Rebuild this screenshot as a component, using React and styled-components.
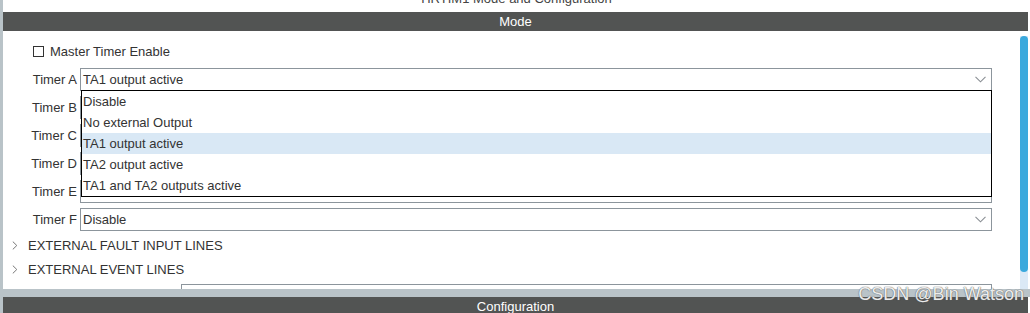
import React from 'react'
import styled, { createGlobalStyle } from 'styled-components'

const GlobalStyle = createGlobalStyle`
  html, body {
    margin: 0;
    padding: 0;
    background: #fff;
  }
  body {
    font-family: "Liberation Sans", Arial, sans-serif;
    color: #333;
  }
`

const timers = [
    { name: 'Timer A', value: 'TA1 output active', open: true },
    { name: 'Timer B', value: 'Disable' },
    { name: 'Timer C', value: 'Disable' },
    { name: 'Timer D', value: 'Disable' },
    { name: 'Timer E', value: 'Disable' },
    { name: 'Timer F', value: 'Disable' },
]

const options = [
    'Disable',
    'No external Output',
    'TA1 output active',
    'TA2 output active',
    'TA1 and TA2 outputs active',
]

function Chevron() {
    return (
        <svg width="11" height="7" viewBox="0 0 11 7">
            <polyline points="0.5,0.8 5.5,5.8 10.5,0.8" fill="none" stroke="#8a8f94" strokeWidth="1.1" />
        </svg>
    )
}

function Arrow() {
    return (
        <svg width="6" height="9" viewBox="0 0 6 9">
            <polyline points="0.8,0.6 4.8,4.5 0.8,8.4" fill="none" stroke="#777" strokeWidth="1" />
        </svg>
    )
}

function App() {
    return (
        <Root>
            <GlobalStyle />
            <TitleArea>
                <TitleText>HRTIM1 Mode and Configuration</TitleText>
            </TitleArea>
            <SectionBar>Mode</SectionBar>
            <Panel>
                <Form>
                    <CheckRow>
                        <CheckBox />
                        <span>Master Timer Enable</span>
                    </CheckRow>
                    <TimerList>
                        {timers.map(t => (
                            <TimerRow key={t.name}>
                                <TimerLabel>{t.name}</TimerLabel>
                                <Select>
                                    <SelectValue>{t.value}</SelectValue>
                                    <Chevron />
                                    {t.open && (
                                        <DropList>
                                            {options.map(o => (
                                                <DropItem key={o} selected={o === t.value}>{o}</DropItem>
                                            ))}
                                        </DropList>
                                    )}
                                </Select>
                            </TimerRow>
                        ))}
                    </TimerList>
                    <ExpandList>
                        <ExpandRow><Arrow /><span>EXTERNAL FAULT INPUT LINES</span></ExpandRow>
                        <ExpandRow><Arrow /><span>EXTERNAL EVENT LINES</span></ExpandRow>
                    </ExpandList>
                    <CutRow>
                        <CutBox />
                    </CutRow>
                </Form>
                <ScrollTrack>
                    <ScrollThumb />
                </ScrollTrack>
            </Panel>
            <GapStrip />
            <SectionBar>Configuration</SectionBar>
            <Watermark>CSDN @Bin Watson</Watermark>
        </Root>
    )
}

export default App;


const Root = styled.div`
  position: relative;
  width: 1030px;
  height: 313px;
  overflow: hidden;
  box-sizing: border-box;
  border-left: 3px solid #b9c3c8;
  display: flex;
  flex-direction: column;
  background: #fff;
`

const TitleArea = styled.div`
  height: 12px;
  flex: none;
  overflow: hidden;
  display: flex;
  justify-content: center;
`

const TitleText = styled.div`
  font-size: 13px;
  line-height: 13px;
  margin-top: -8px;
  color: #444;
`

const SectionBar = styled.div`
  flex: none;
  height: 19px;
  margin-right: 2px;
  background: #525453;
  color: #fff;
  font-size: 13px;
  line-height: 19px;
  text-align: center;
`

const Panel = styled.div`
  flex: none;
  height: 258px;
  display: flex;
  overflow: hidden;
  background: #fff;
`

const Form = styled.div`
  flex: 1;
  display: flex;
  flex-direction: column;
  padding: 10px 28px 0 0;
  font-size: 13px;
  & > * {
    flex-shrink: 0;
  }
`

const CheckRow = styled.div`
  height: 20px;
  display: flex;
  align-items: center;
  gap: 6px;
  padding-left: 30px;
`

const CheckBox = styled.div`
  width: 11px;
  height: 11px;
  box-sizing: border-box;
  border: 1px solid #333;
  background: #fff;
`

const TimerList = styled.div`
  display: flex;
  flex-direction: column;
  gap: 5px;
  margin-top: 7px;
`

const TimerRow = styled.div`
  flex: none;
  display: flex;
  align-items: center;
  height: 23px;
`

const TimerLabel = styled.div`
  width: 74px;
  margin-right: 3px;
  text-align: right;
  white-space: nowrap;
`

const Select = styled.div`
  position: relative;
  flex: 1;
  height: 23px;
  box-sizing: border-box;
  border: 1px solid #8c959c;
  background: #fff;
  display: flex;
  align-items: center;
  justify-content: space-between;
  padding: 0 5px 0 2px;
`

const SelectValue = styled.span`
  color: #333;
`

const DropList = styled.div`
  position: absolute;
  top: 100%;
  left: 0;
  right: -1px;
  z-index: 5;
  background: #fff;
  border: 1px solid #000;
  display: flex;
  flex-direction: column;
`

const DropItem = styled.div`
  height: 21px;
  line-height: 22px;
  padding-left: 1px;
  color: #333;
  background: ${props => props.selected ? '#d9e8f5' : '#fff'};
`

const ExpandList = styled.div`
  display: flex;
  flex-direction: column;
  gap: 4px;
  margin-top: 4px;
`

const ExpandRow = styled.div`
  flex: none;
  height: 20px;
  display: flex;
  align-items: center;
  gap: 10px;
  padding-left: 9px;
`

const CutRow = styled.div`
  display: flex;
  padding-left: 178px;
  margin-top: 5px;
`

const CutBox = styled.div`
  flex: 1;
  height: 23px;
  box-sizing: border-box;
  border: 1px solid #8c959c;
`

const ScrollTrack = styled.div`
  width: 8px;
  margin-right: 2px;
  display: flex;
  flex-direction: column;
  padding-top: 5px;
  background: linear-gradient(#fff 0, #fff 5px, #dbe9f6 5px);
`

const ScrollThumb = styled.div`
  height: 236px;
  border-radius: 4px;
  background: #3aa9dd;
`

const GapStrip = styled.div`
  flex: none;
  height: 8px;
  background: #b9c3c8;
`

const Watermark = styled.div`
  position: absolute;
  right: 6px;
  bottom: 8px;
  font-size: 18px;
  color: rgba(255, 255, 255, 0.9);
  text-shadow: 0 0 1px #666, 0 0 1px #666;
  white-space: nowrap;
`
